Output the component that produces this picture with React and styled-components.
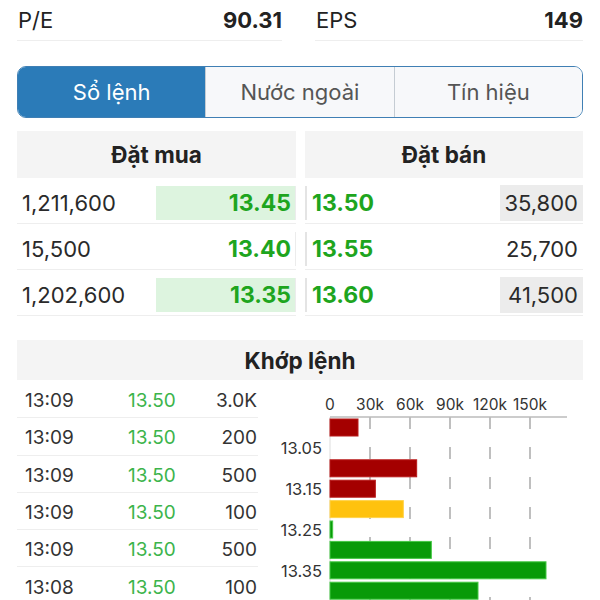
import React from 'react';
import styled, { createGlobalStyle } from 'styled-components';

const GlobalStyle = createGlobalStyle`
  * { box-sizing: border-box; }
  body {
    margin: 0;
    background: #fff;
    font-family: Inter, "Noto Sans", sans-serif;
    color: #222;
  }
`;

const stats = [
  { label: 'P/E', value: '90.31' },
  { label: 'EPS', value: '149' },
];

const tabs = ['Sổ lệnh', 'Nước ngoài', 'Tín hiệu'];

const buys = [
  { qty: '1,211,600', price: '13.45', hl: true },
  { qty: '15,500', price: '13.40', hl: false },
  { qty: '1,202,600', price: '13.35', hl: true },
];

const sells = [
  { price: '13.50', qty: '35,800', hl: true },
  { price: '13.55', qty: '25,700', hl: false },
  { price: '13.60', qty: '41,500', hl: true },
];

const trades = [
  ['13:09', '13.50', '3.0K'],
  ['13:09', '13.50', '200'],
  ['13:09', '13.50', '500'],
  ['13:09', '13.50', '100'],
  ['13:09', '13.50', '500'],
  ['13:08', '13.50', '100'],
];

// volume by price, in k
const volumes = [
  { price: '13.00', v: 21, color: 'red' },
  { price: '13.05', v: 0, color: 'red' },
  { price: '13.10', v: 65, color: 'red' },
  { price: '13.15', v: 34, color: 'red' },
  { price: '13.20', v: 55, color: 'ref' },
  { price: '13.25', v: 2, color: 'up' },
  { price: '13.30', v: 76, color: 'up' },
  { price: '13.35', v: 162, color: 'up' },
  { price: '13.40', v: 111, color: 'up' },
];

const barColors = {
  red: { fill: '#a40000', stroke: '#b81a1a' },
  ref: { fill: '#ffc20e', stroke: '#ffd24a' },
  up: { fill: '#089a08', stroke: '#45c845' },
};

const VolumeChart = () => {
  const x0 = 72;
  const axisY = 37;
  const perK = 40 / 30;
  const ticks = [0, 30, 60, 90, 120, 150];
  return (
    <svg width="325" height="222" viewBox="0 0 325 222">
      {ticks.map((t) => (
        <text
          key={t}
          x={x0 + t * perK}
          y={30}
          textAnchor="middle"
          fontSize="15.5"
          fontFamily="Inter, sans-serif"
          fill="#333"
        >
          {t === 0 ? '0' : `${t}k`}
        </text>
      ))}
      <line x1={x0} y1={axisY} x2={x0} y2={222} stroke="#ddd" strokeWidth="1" />
      {ticks.slice(1).map((t) => (
        <line
          key={t}
          x1={x0 + t * perK}
          y1={axisY}
          x2={x0 + t * perK}
          y2={222}
          stroke="#aaa"
          strokeWidth="1.5"
          strokeDasharray="12 18"
        />
      ))}
      <line x1={x0} y1={axisY} x2={309} y2={axisY} stroke="#bbb" strokeWidth="1.5" />
      {volumes.map((d, i) => {
        const y = 39 + i * 20.4;
        const c = barColors[d.color];
        return (
          <g key={d.price}>
            {d.v > 0 && (
              <rect
                x={x0}
                y={y}
                width={d.v * perK}
                height={17}
                fill={c.fill}
                stroke={c.stroke}
                strokeWidth="1"
              />
            )}
            {i % 2 === 1 && (
              <text
                x={64}
                y={y + 15}
                textAnchor="end"
                fontSize="16.5"
                fontFamily="Inter, sans-serif"
                fill="#333"
              >
                {d.price}
              </text>
            )}
          </g>
        );
      })}
    </svg>
  );
};

const App = () => {
  return (
    <>
      <GlobalStyle />
      <Page>
        <StatsRow>
          {stats.map((s) => (
            <Stat key={s.label}>
              <StatLabel>{s.label}</StatLabel>
              <StatValue>{s.value}</StatValue>
            </Stat>
          ))}
        </StatsRow>

        <Tabs>
          {tabs.map((t, i) => (
            <Tab key={t} $active={i === 0}>{t}</Tab>
          ))}
        </Tabs>

        <OrderBook>
          <BookColumn>
            <BookHeader>Đặt mua</BookHeader>
            {buys.map((b) => (
              <BookRow key={b.price}>
                <Qty>{b.qty}</Qty>
                <BuyPrice $hl={b.hl}>{b.price}</BuyPrice>
              </BookRow>
            ))}
          </BookColumn>
          <BookColumn>
            <BookHeader>Đặt bán</BookHeader>
            {sells.map((s) => (
              <BookRow key={s.price}>
                <SellPrice>{s.price}</SellPrice>
                <SellQty $hl={s.hl}>{s.qty}</SellQty>
              </BookRow>
            ))}
          </BookColumn>
        </OrderBook>

        <SectionHeader>Khớp lệnh</SectionHeader>
        <MatchArea>
          <TradeList>
            {trades.map((t, i) => (
              <TradeRow key={i} $last={i === trades.length - 1}>
                <TradeTime>{t[0]}</TradeTime>
                <TradePrice>{t[1]}</TradePrice>
                <TradeVol>{t[2]}</TradeVol>
              </TradeRow>
            ))}
          </TradeList>
          <ChartBox>
            <VolumeChart />
          </ChartBox>
        </MatchArea>
      </Page>
    </>
  );
};

export default App;

const Page = styled.div`
  width: 600px;
  padding: 0 17px;
`;

const StatsRow = styled.div`
  display: grid;
  grid-template-columns: 265px 268px;
  column-gap: 33px;
`;

const Stat = styled.div`
  height: 41px;
  display: flex;
  align-items: center;
  justify-content: space-between;
  border-bottom: 1px solid #eeeeee;
  padding-left: 1px;
  font-size: 22px;
`;

const StatLabel = styled.span`
  color: #222;
`;

const StatValue = styled.span`
  font-weight: 700;
  color: #222;
`;

const Tabs = styled.div`
  margin-top: 25px;
  height: 52px;
  display: flex;
  border: 1.5px solid #3f7fb4;
  border-radius: 9px;
  overflow: hidden;
`;

const Tab = styled.div`
  flex: 1;
  display: flex;
  align-items: center;
  justify-content: center;
  font-size: 22px;
  background: ${(p) => (p.$active ? '#2b7bb8' : '#f7f8fa')};
  color: ${(p) => (p.$active ? '#fff' : '#555')};
  & + & {
    border-left: 1px solid #c5ccd3;
  }
`;

const OrderBook = styled.div`
  margin-top: 13px;
  display: grid;
  grid-template-columns: 279px 278px;
  column-gap: 9px;
`;

const BookColumn = styled.div`
  display: flex;
  flex-direction: column;
`;

const BookHeader = styled.div`
  height: 47px;
  display: flex;
  align-items: center;
  justify-content: center;
  background: #f4f4f4;
  font-size: 22.5px;
  font-weight: 700;
  color: #222;
`;

const BookRow = styled.div`
  height: 46px;
  display: flex;
  align-items: center;
  justify-content: space-between;
  padding-top: 4px;
  border-bottom: 1px solid #eeeeee;
  font-size: 22px;
`;

const Qty = styled.span`
  padding-left: 5px;
  color: #2a2a2a;
`;

const BuyPrice = styled.span`
  width: 140px;
  height: 34px;
  display: flex;
  align-items: center;
  justify-content: flex-end;
  padding-right: 4px;
  font-size: 23px;
  font-weight: 700;
  color: #1ea51e;
  background: ${(p) => (p.$hl ? '#ddf4df' : 'transparent')};
  border-right: 1px solid #ececec;
`;

const SellPrice = styled.span`
  height: 34px;
  display: flex;
  align-items: center;
  padding-left: 5px;
  border-left: 2px solid #e4e4e4;
  font-size: 23px;
  font-weight: 700;
  color: #1ea51e;
`;

const SellQty = styled.span`
  width: 83px;
  height: 36px;
  display: flex;
  align-items: center;
  justify-content: flex-end;
  padding-right: 5px;
  color: #2a2a2a;
  background: ${(p) => (p.$hl ? '#ececec' : 'transparent')};
`;

const SectionHeader = styled.div`
  margin-top: 24px;
  height: 40px;
  display: flex;
  align-items: center;
  justify-content: center;
  background: #f4f4f4;
  font-size: 22.5px;
  font-weight: 700;
  color: #222;
`;

const MatchArea = styled.div`
  display: grid;
  grid-template-columns: 241px 325px;
`;

const TradeList = styled.div`
  display: flex;
  flex-direction: column;
  padding-top: 1px;
`;

const TradeRow = styled.div`
  height: 37.3px;
  display: grid;
  grid-template-columns: 103px 60px 1fr;
  align-items: center;
  padding: 3px 1px 0 8px;
  font-size: 19px;
  border-bottom: ${(p) => (p.$last ? 'none' : '1px solid #eeeeee')};
`;

const TradeTime = styled.span`
  color: #333;
`;

const TradePrice = styled.span`
  color: #3cb44b;
`;

const TradeVol = styled.span`
  text-align: right;
  color: #333;
`;

const ChartBox = styled.div`
  display: flex;
`;
